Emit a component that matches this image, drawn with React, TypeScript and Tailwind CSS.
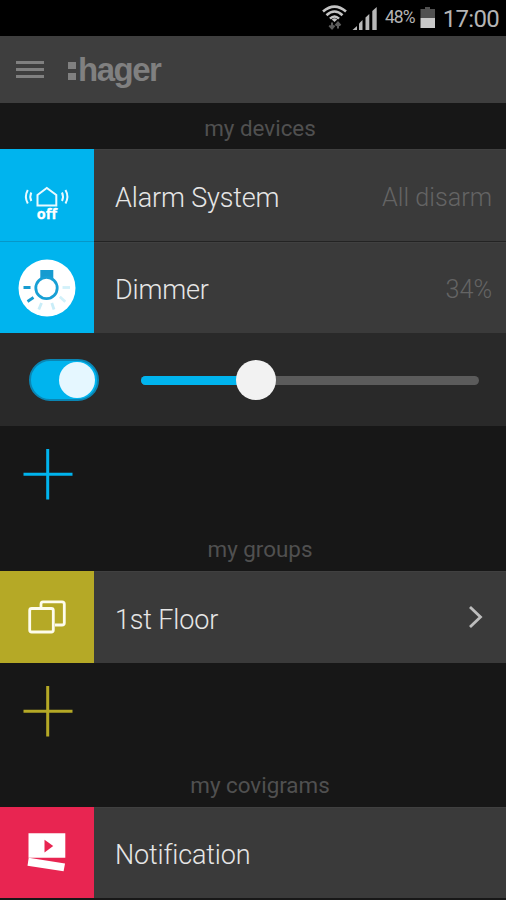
import React, { useState } from "react";

const CYAN = "#00b4ee";

interface RowProps {
  icon: React.ReactNode;
  tile: string;
  label: string;
  right?: React.ReactNode;
  height?: string;
}

function Row({ icon, tile, label, right, height = "h-[92px]" }: RowProps) {
  return (
    <div className={`flex bg-[#3a3a3a] ${height}`}>
      <div className={`h-full w-[94px] shrink-0 ${tile}`}>{icon}</div>
      <div className="flex flex-1 items-center justify-between border-t border-[#404040] pt-[4px] pr-[14px] pl-[21px]">
        <span className="text-[27px] leading-8 font-light tracking-[-0.150px] text-[#e6e6e6]">{label}</span>
        {right}
      </div>
    </div>
  );
}

function Status({ children }: { children: React.ReactNode }) {
  return <span className="text-[25.200px] leading-8 font-light text-[#646464]">{children}</span>;
}

function SectionTitle({ children, className = "" }: { children: string; className?: string }) {
  return (
    <h2 className={`flex items-center justify-center pl-[14px] text-[22.400px] leading-none text-[#505050] ${className}`}>
      {children}
    </h2>
  );
}

function AddButton({ color }: { color: string }) {
  return (
    <button className="block h-[96px] w-[94px]" aria-label="Add">
      <svg viewBox="0 0 94 96" className="h-full w-full" stroke={color} strokeWidth="3">
        <path d="M23.500 48.300H72.500M47.700 23V73.500" />
      </svg>
    </button>
  );
}

function StatusBar() {
  return (
    <div className="flex h-9 items-center bg-black pr-[7px] pl-[322px] text-[#b4b4b4]">
      <svg width="26" height="36" viewBox="0 0 26 36" fill="none" className="shrink-0">
        <g stroke="#c4c4c4" strokeWidth="2.600">
          <path d="M1 11.600Q12.500 1.600 24 11.600" />
          <path d="M4.500 15.200Q12.500 7.800 20.500 15.200" />
          <path d="M8 18.600Q12.500 14.400 17 18.600" />
        </g>
        <path d="M9.800 19.400Q12.500 17.200 15.200 19.400L12.500 22Z" fill="#c4c4c4" />
        <g stroke="#5c5c5c" strokeWidth="2">
          <path d="M10 22.500V28.500M7.300 25.500L10 28.500L12.500 25.500M16 28.500V22.500M13.500 25.500L16 22.500L18.500 25.500" />
        </g>
      </svg>
      <svg width="26" height="36" viewBox="0 0 26 36" fill="#b8b8b8" className="ml-1 shrink-0">
        <path d="M0.500 30L5 26V30Z" />
        <path d="M7 23.500L10.500 20V30H7Z" />
        <path d="M13.500 17.500L17.300 14V30H13.500Z" />
        <path d="M20.300 11L24.700 7V30H20.300Z" />
      </svg>
      <span className="ml-[7px] w-[31px] text-[17.500px] leading-none tracking-[-1px] text-[#b4b4b4]">48%</span>
      <svg width="17" height="36" viewBox="0 0 17 36" className="ml-[4px] shrink-0">
        <path d="M5 7H10V9H15V18H0.500V9H5Z" fill="#505050" />
        <path d="M0.500 18H15V28H0.500Z" fill="#c8c8c8" />
      </svg>
      <span className="ml-auto pt-px text-[24px] leading-none tracking-[-0.700px]">17:00</span>
    </div>
  );
}

function AlarmIcon() {
  return (
    <svg viewBox="0 0 94 92" className="h-full w-full" fill="none" stroke="#e9faff" strokeWidth="2">
      <path d="M37.500 46L46.800 39L56.300 46V56.500H37.500Z" />
      <path d="M31.300 43.500Q29.300 47.700 31.300 52M27.800 41Q24 47.700 27.800 54.500" />
      <path d="M62 43.500Q64 47.700 62 52M65.500 41Q69.300 47.700 65.500 54.500" />
      <text x="46.800" y="70" textAnchor="middle" fill="#fff" stroke="#fff" strokeWidth=".3" fontSize="14.5" fontWeight="700" fontFamily="Open Sans, sans-serif">
        off
      </text>
    </svg>
  );
}

function DimmerIcon() {
  return (
    <svg viewBox="0 0 94 91" className="h-full w-full" fill="none">
      <circle cx="47" cy="46" r="28.500" fill="#fff" />
      <path d="M40.300 28H53.300V37H40.300Z" fill="#169bd0" />
      <circle cx="46.500" cy="46" r="10.700" fill="#fff" stroke="#18a0d5" strokeWidth="2.800" />
      <g strokeWidth="2.800">
        <path d="M23.500 45.500H30.500M27.500 59.500L33.500 55.500" stroke="#169bd0" />
        <path d="M38.800 67.500L41.500 61" stroke="#c9edf8" />
        <path d="M54 67.500L51.800 61" stroke="#c9edf8" />
        <path d="M65.300 59.800L59.800 54.800" stroke="#d2f1fa" />
        <path d="M62.500 45.500H70" stroke="#d2f1fa" />
      </g>
    </svg>
  );
}

function GroupIcon() {
  return (
    <svg viewBox="0 0 94 92" className="h-full w-full" fill="none" stroke="#fdfcec" strokeWidth="2.800">
      <path d="M41 36.500V33.300Q41 30.800 43 30.800H62Q64.300 30.800 64.300 33V52Q64.300 54 62 54H55" />
      <rect x="29.700" y="37.500" width="23.600" height="23.500" rx="2" />
    </svg>
  );
}

function NotificationIcon() {
  return (
    <svg viewBox="0 0 94 92" className="h-full w-full" fill="#fff">
      <path d="M28.300 26.500H65.500V51.300H28.300Z" />
      <path d="M44.500 33L53.300 39.500L44.500 46Z" fill="#e82551" />
      <path d="M28.500 51.300L65.200 57L63.800 65L27.300 59.500Z" />
    </svg>
  );
}

export default function App() {
  const [on, setOn] = useState(true);
  const [level, setLevel] = useState(34);

  return (
    <div className="h-[900px] w-[506px] overflow-hidden bg-[#171717] font-['Roboto',sans-serif]">
      <StatusBar />

      {/* Header */}
      <header className="flex h-[67px] items-center bg-[#3e3e3e] pl-4">
        <button className="flex w-7 flex-col gap-1" aria-label="Menu">
          <span className="h-[3px] bg-[#808080]" />
          <span className="h-[3px] bg-[#808080]" />
          <span className="h-[3px] bg-[#808080]" />
        </button>
        <div className="ml-6 flex items-center text-[#808080]">
          <span className="flex flex-col gap-1 pt-[3px]">
            <span className="h-[7px] w-[8px] bg-[#808080]" />
            <span className="h-[7px] w-[8px] bg-[#808080]" />
          </span>
          <span className="ml-[2px] pb-px font-['Liberation_Sans',sans-serif] text-[33px] leading-none font-bold tracking-[-1.500px]">hager</span>
        </div>
      </header>

      <main>
        <SectionTitle className="h-[46px] pt-1">my devices</SectionTitle>
        <Row icon={<AlarmIcon />} tile="bg-[#00b4ee]" label="Alarm System" right={<Status>All disarm</Status>} />
        <div className="flex h-px">
          <div className="w-[94px] bg-[#0797c8]" />
          <div className="flex-1 bg-[#232323]" />
        </div>
        <Row
          icon={<DimmerIcon />}
          tile="bg-[#00b4ee]"
          label="Dimmer"
          right={<Status>{level}%</Status>}
          height="h-[91px]"
        />

        {/* Dimmer controls */}
        <div className="flex h-[93px] items-center bg-[#292929] pt-px pl-[29px]">
          <button
            onClick={() => setOn(!on)}
            className={`flex h-[42px] w-[70px] items-center rounded-full border-2 border-[#0a86b4] px-[2px] ${on ? "justify-end bg-[#00b4ee]" : "justify-start bg-[#5a5a5a]"}`}
            aria-label="Toggle dimmer"
          >
            <span className="h-9 w-9 rounded-full bg-[#e5f7ff]" />
          </button>
          <div className="relative ml-[42px] flex h-10 w-[338px] items-center">
            <div className="h-[9px] w-full overflow-hidden rounded-full bg-[#5b5b5b]">
              <div className="h-full bg-[#00b4ee]" style={{ width: `${level}%` }} />
            </div>
            <span
              className="absolute top-0 h-10 w-10 -translate-x-1/2 rounded-full bg-[#f2f2f2]"
              style={{ left: `${level}%` }}
            />
            <input
              type="range"
              value={level}
              onChange={(e) => setLevel(Number(e.target.value))}
              className="absolute inset-0 w-full opacity-0"
              aria-label="Dimmer level"
            />
          </div>
        </div>
        <AddButton color={CYAN} />

        <SectionTitle className="h-[49px] pt-[5px]">my groups</SectionTitle>
        <Row
          icon={<GroupIcon />}
          tile="bg-[#b5a926]"
          label="1st Floor"
          right={
            <svg width="16" height="26" viewBox="0 0 16 26" fill="none" stroke="#bdbdbd" strokeWidth="2.800" className="mr-[8px] mb-[5px]">
              <path d="M2 3L12.500 13L2 23" />
            </svg>
          }
        />
        <AddButton color="#b5a926" />

        <SectionTitle className="h-[48px] pt-[4px]">my covigrams</SectionTitle>
        <Row icon={<NotificationIcon />} tile="bg-[#e82551]" label="Notification" height="h-[91px]" />
      </main>
    </div>
  );
}
